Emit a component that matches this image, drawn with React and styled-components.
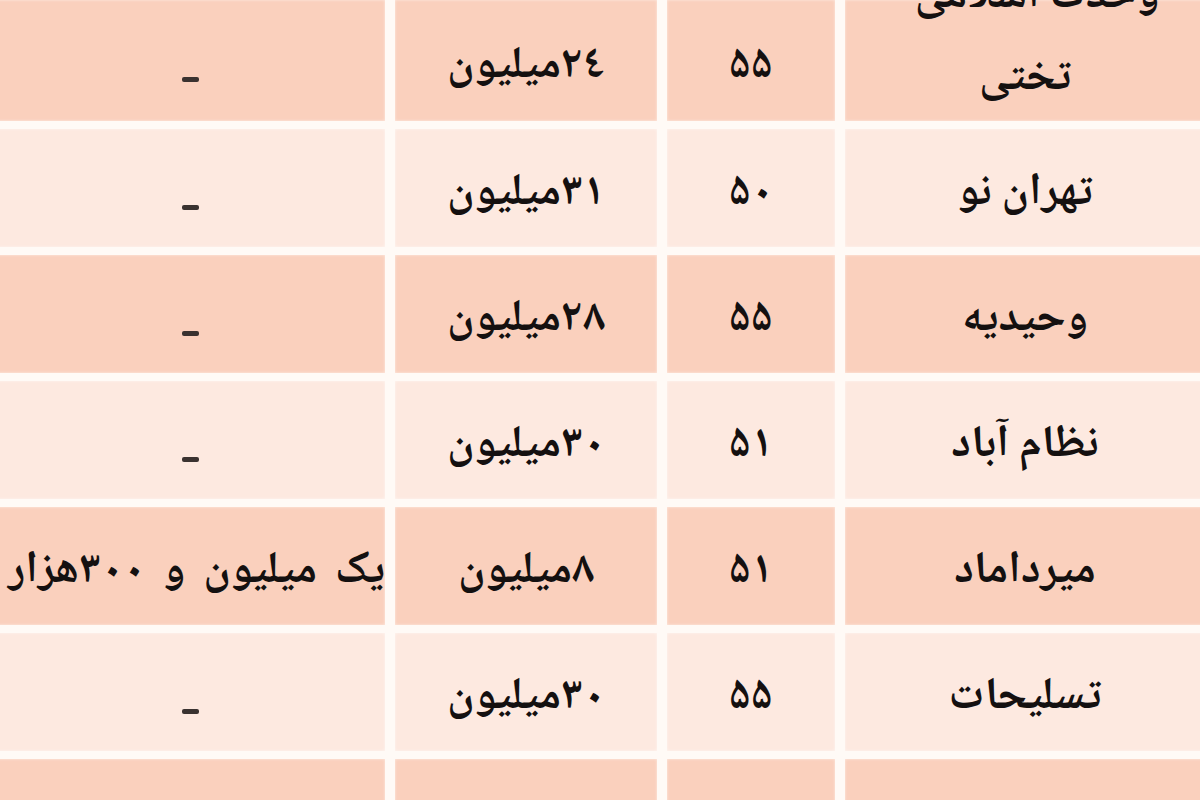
import React from "react";
import styled, { createGlobalStyle } from "styled-components";

const GlobalStyle = createGlobalStyle`
  html, body {
    margin: 0;
    padding: 0;
    background: #fffaf6;
    overflow: hidden;
  }
`;

const Viewport = styled.div`
  width: 1200px;
  height: 800px;
  overflow: hidden;
  background: #fffaf6;
`;

const Table = styled.div`
  direction: rtl;
  width: 1210px;
  margin-left: -5px;
  display: flex;
  flex-direction: column;
  gap: 8px;
`;

const Row = styled.div`
  display: grid;
  grid-template-columns: 360px 168px 262px 390px;
  grid-template-rows: ${(p) => p.$height}px;
  column-gap: 10px;
  height: ${(p) => p.$height}px;
  flex-shrink: 0;
`;

const Cell = styled.div`
  display: flex;
  flex-direction: column;
  align-items: ${(p) => (p.$wide ? "flex-start" : "center")};
  justify-content: ${(p) => (p.$stack ? "flex-end" : "center")};
  padding: ${(p) => (p.$stack ? "0 0 0" : "14px 0 0")};
  box-sizing: border-box;
  background: ${(p) => (p.$dark ? "#fad0bd" : "#fde9e0")};
  box-shadow: inset 0 0 3px rgba(255, 255, 255, 0.6);
  color: #141010;
  font-family: "Noto Naskh Arabic", "Noto Sans Arabic", "DejaVu Sans", sans-serif;
  font-weight: 700;
  font-size: 45px;
  line-height: ${(p) => (p.$stack ? "82px" : "1.2")};
  word-spacing: ${(p) => (p.$wide ? "8px" : "0")};
  white-space: nowrap;
  min-width: 0;
  min-height: 0;
`;

const Line = styled.span`
  display: block;
  flex-shrink: 0;
`;

const Dash = styled.span`
  display: block;
  flex-shrink: 0;
  width: 17px;
  height: 5px;
  border-radius: 2px;
  background: #3a3230;
  margin-top: 24px;
`;

const rows = [
  { name: ["وحدت اسلامی -", "تختی"], area: "۵۵", price: "۲٤میلیون", loan: null, dark: true, height: 121 },
  { name: ["تهران نو"], area: "۵۰", price: "۳۱میلیون", loan: null, dark: false, height: 118 },
  { name: ["وحیدیه"], area: "۵۵", price: "۲۸میلیون", loan: null, dark: true, height: 118 },
  { name: ["نظام آباد"], area: "۵۱", price: "۳۰میلیون", loan: null, dark: false, height: 118 },
  { name: ["میرداماد"], area: "۵۱", price: "۸میلیون", loan: "یک میلیون و ۳۰۰هزار", dark: true, height: 118 },
  { name: ["تسلیحات"], area: "۵۵", price: "۳۰میلیون", loan: null, dark: false, height: 118 },
  { name: [""], area: "", price: "", loan: "", dark: true, height: 118 },
];

export default function App() {
  return (
    <Viewport>
      <GlobalStyle />
      <Table>
        {rows.map((r, i) => (
          <Row key={i} $height={r.height}>
            <Cell $dark={r.dark} $stack={r.name.length > 1}>
              {r.name.map((line, j) => (
                <Line key={j}>{line}</Line>
              ))}
            </Cell>
            <Cell $dark={r.dark}>{r.area}</Cell>
            <Cell $dark={r.dark}>{r.price}</Cell>
            <Cell $dark={r.dark} $wide={!!r.loan}>
              {r.loan === null ? <Dash /> : r.loan}
            </Cell>
          </Row>
        ))}
      </Table>
    </Viewport>
  );
}
